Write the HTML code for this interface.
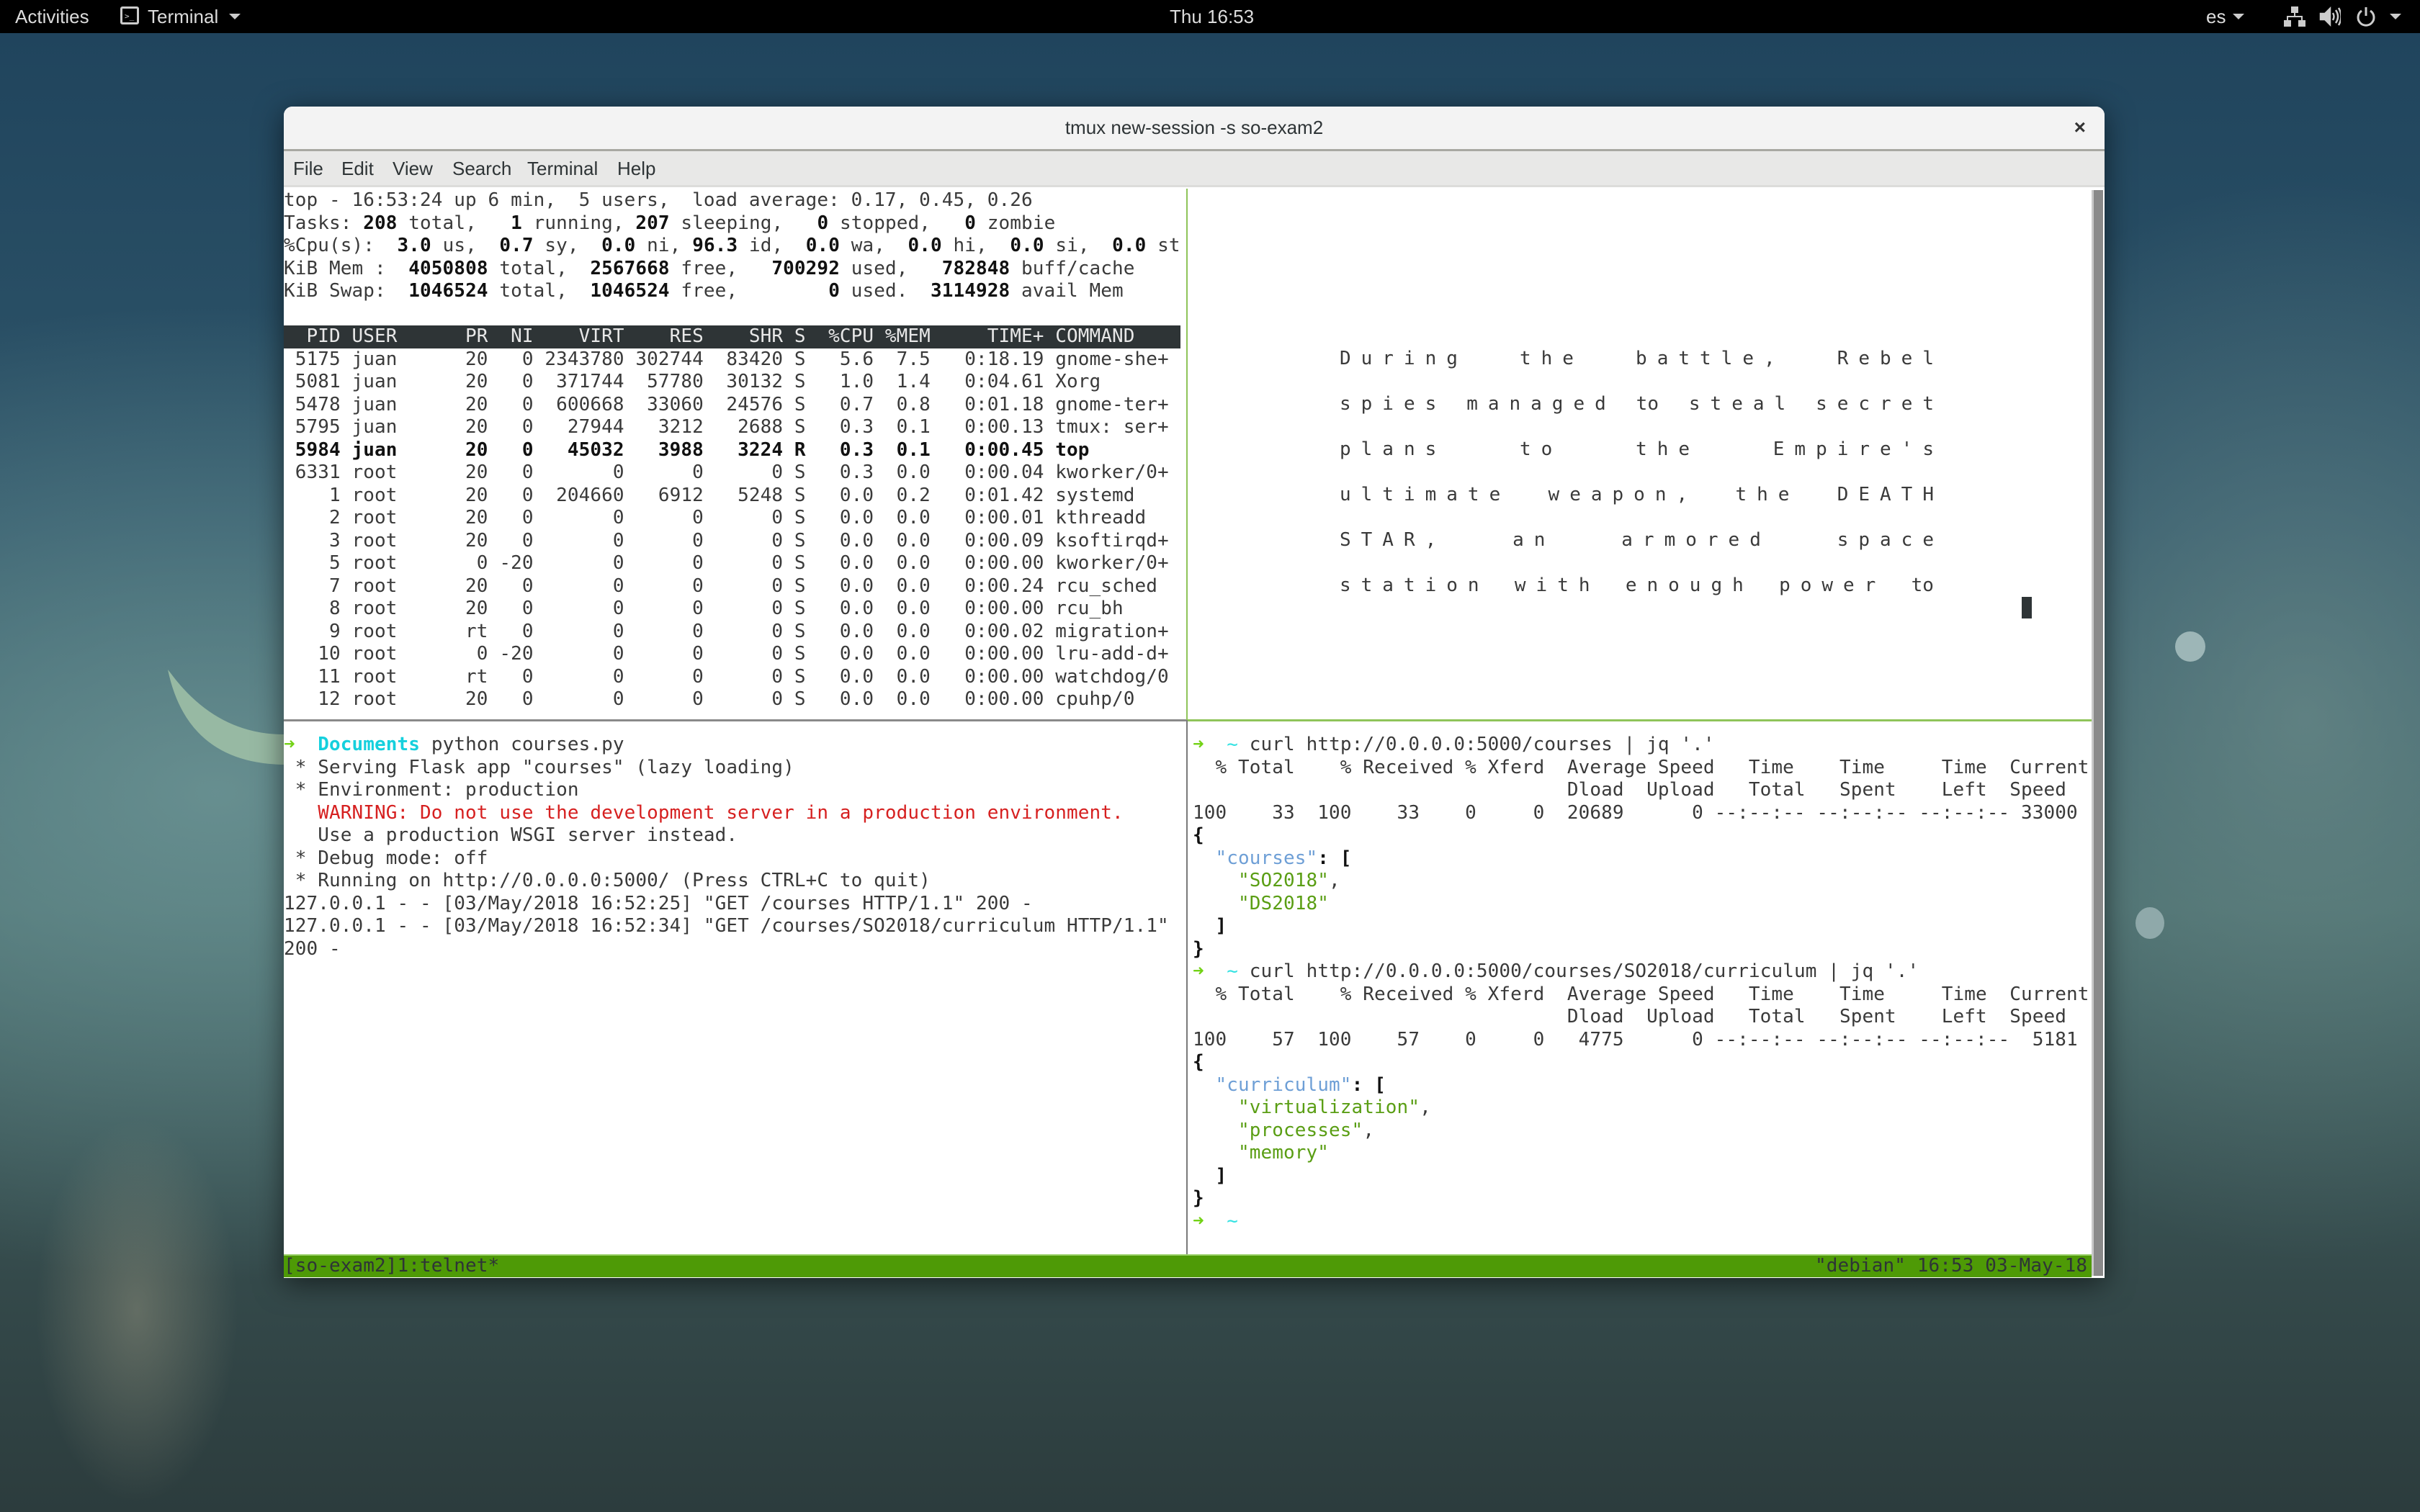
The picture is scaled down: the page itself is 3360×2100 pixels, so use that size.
<!DOCTYPE html>
<html><head><meta charset="utf-8"><style>
*{margin:0;padding:0;box-sizing:border-box}
html,body{width:3360px;height:2100px;overflow:hidden}
body{position:relative;font-family:"Liberation Sans",sans-serif;
background:
radial-gradient(ellipse 200px 380px at 190px 1820px,rgba(170,165,140,.4),rgba(170,165,140,0) 70%),
radial-gradient(ellipse 1400px 900px at 300px 1100px,rgba(110,150,150,.85),rgba(110,150,150,0) 75%),
radial-gradient(ellipse 800px 1000px at 3200px 1000px,rgba(120,150,145,.6),rgba(120,150,145,0) 75%),
linear-gradient(180deg,#1f435c 0%,#2f566a 35%,#456a6c 60%,#34494a 85%,#2c3c3d 100%);}
.top{position:absolute;left:0;top:0;width:3360px;height:46px;background:#000;color:#dcdcdc;font-size:26px}
.top span{position:absolute;top:8px}
.win{position:absolute;left:394px;top:148px;width:2528px;height:1627px;background:#fff;border-radius:12px 12px 0 0;box-shadow:0 8px 40px rgba(0,0,0,.55)}
.title{position:absolute;left:0;top:0;width:2528px;height:62px;background:#f3f3f3;border-radius:12px 12px 0 0;border-bottom:3px solid #a8a8a2;text-align:center;font-size:26px;line-height:58px;color:#2e3436}
.menu{position:absolute;left:0;top:62px;width:2528px;height:50px;background:#e8e8e7;border-bottom:3px solid #dcdcda;font-size:26px;color:#2e3436}
.menu span{position:absolute;top:9px}
pre{position:absolute;font-family:"DejaVu Sans Mono",monospace;font-size:26px;letter-spacing:0.1px;line-height:31.5px;color:#3a3a3a;white-space:pre}
b{color:#111;font-weight:bold}
.hd{background:#2e3436;color:#e8e8e8;display:inline-block;width:1245px}
.r{color:#d62020}.cy{color:#15d0dd;font-weight:bold}.ar{color:#73d216}.tl{color:#34e2e2}.k{color:#6e9fd6}.s{color:#5a9e14}
.sw{position:absolute;left:1860px;width:825px;display:flex;justify-content:space-between;font-family:"DejaVu Sans Mono",monospace;font-size:26px;color:#3a3a3a;white-space:pre}
.sw span{letter-spacing:14px;margin-right:-14px}
.sw span.t{letter-spacing:0;margin-right:0}
</style></head><body>
<div class="top">
<span style="left:21px">Activities</span>
<div style="position:absolute;left:167px;top:9px;width:26px;height:25px;border:3px solid #ccc;border-radius:3px"><div style="position:absolute;left:3px;top:4px;font-size:11px;color:#ccc;font-family:'DejaVu Sans Mono'">&gt;_</div></div>
<span style="left:205px">Terminal</span>
<div style="position:absolute;left:318px;top:19px;border-left:8px solid transparent;border-right:8px solid transparent;border-top:8px solid #ccc"></div>
<span style="left:1624px">Thu 16:53</span>
<span style="left:3063px">es</span>
<div style="position:absolute;left:3100px;top:19px;border-left:8px solid transparent;border-right:8px solid transparent;border-top:8px solid #ccc"></div>
<svg style="position:absolute;left:3170px;top:8px" width="32" height="30" viewBox="0 0 32 30" fill="#ccc"><rect x="11" y="1" width="10" height="9"/><rect x="15" y="10" width="2" height="6"/><rect x="5" y="14" width="22" height="2"/><rect x="5" y="14" width="2" height="6"/><rect x="25" y="14" width="2" height="6"/><rect x="1" y="20" width="10" height="9"/><rect x="21" y="20" width="10" height="9"/></svg>
<svg style="position:absolute;left:3220px;top:9px" width="30" height="28" viewBox="0 0 30 28" fill="none" stroke="#ccc" stroke-width="2.5"><path d="M2 10h6l7-7v22l-7-7H2z" fill="#ccc"/><path d="M19 9q3 5 0 10M23 5q6 9 0 18M27 2q7 12 0 24"/></svg>
<svg style="position:absolute;left:3270px;top:8px" width="30" height="30" viewBox="0 0 30 30" fill="none" stroke="#ccc" stroke-width="3"><path d="M9 7a11 11 0 1 0 12 0"/><path d="M15 2v12"/></svg>
<div style="position:absolute;left:3318px;top:19px;border-left:8px solid transparent;border-right:8px solid transparent;border-top:8px solid #ccc"></div>
</div>

<svg style="position:absolute;left:0;top:0" width="3360" height="2100">
<path d="M233 930 Q260 1060 394 1062 L394 1020 Q300 1020 237 935 Z" fill="#97b9a3"/>
<ellipse cx="3041" cy="898" rx="21" ry="21" fill="#9db6b7"/>
<ellipse cx="2985" cy="1282" rx="20" ry="22" fill="#8fa9aa"/>
</svg>

<div class="win">
<div class="title">tmux new-session -s so-exam2<span style="position:absolute;right:26px;top:0;font-size:28px;font-weight:bold;color:#333">×</span></div>
<div class="menu"><span style="left:13px">File</span><span style="left:80px">Edit</span><span style="left:151px">View</span><span style="left:234px">Search</span><span style="left:338px">Terminal</span><span style="left:463px">Help</span></div>
<div style="position:absolute;left:2510px;top:116px;width:16px;height:1508px;background:#8a8a8a;border-left:3px solid #c8c8c8"></div>
</div>

<pre style="left:394px;top:263px">top - 16:53:24 up 6 min,  5 users,  load average: 0.17, 0.45, 0.26
Tasks: <b>208</b> total,   <b>1</b> running, <b>207</b> sleeping,   <b>0</b> stopped,   <b>0</b> zombie
%Cpu(s):  <b>3.0</b> us,  <b>0.7</b> sy,  <b>0.0</b> ni, <b>96.3</b> id,  <b>0.0</b> wa,  <b>0.0</b> hi,  <b>0.0</b> si,  <b>0.0</b> st
KiB Mem :  <b>4050808</b> total,  <b>2567668</b> free,   <b>700292</b> used,   <b>782848</b> buff/cache
KiB Swap:  <b>1046524</b> total,  <b>1046524</b> free,        <b>0</b> used.  <b>3114928</b> avail Mem

<span class="hd">  PID USER      PR  NI    VIRT    RES    SHR S  %CPU %MEM     TIME+ COMMAND   </span>
 5175 juan      20   0 2343780 302744  83420 S   5.6  7.5   0:18.19 gnome-she+
 5081 juan      20   0  371744  57780  30132 S   1.0  1.4   0:04.61 Xorg
 5478 juan      20   0  600668  33060  24576 S   0.7  0.8   0:01.18 gnome-ter+
 5795 juan      20   0   27944   3212   2688 S   0.3  0.1   0:00.13 tmux: ser+
<b> 5984 juan      20   0   45032   3988   3224 R   0.3  0.1   0:00.45 top</b>
 6331 root      20   0       0      0      0 S   0.3  0.0   0:00.04 kworker/0+
    1 root      20   0  204660   6912   5248 S   0.0  0.2   0:01.42 systemd
    2 root      20   0       0      0      0 S   0.0  0.0   0:00.01 kthreadd
    3 root      20   0       0      0      0 S   0.0  0.0   0:00.09 ksoftirqd+
    5 root       0 -20       0      0      0 S   0.0  0.0   0:00.00 kworker/0+
    7 root      20   0       0      0      0 S   0.0  0.0   0:00.24 rcu_sched
    8 root      20   0       0      0      0 S   0.0  0.0   0:00.00 rcu_bh
    9 root      rt   0       0      0      0 S   0.0  0.0   0:00.02 migration+
   10 root       0 -20       0      0      0 S   0.0  0.0   0:00.00 lru-add-d+
   11 root      rt   0       0      0      0 S   0.0  0.0   0:00.00 watchdog/0
   12 root      20   0       0      0      0 S   0.0  0.0   0:00.00 cpuhp/0</pre>

<pre style="left:394px;top:1019px"><span class="ar">➜</span>  <span class="cy">Documents</span> python courses.py
 * Serving Flask app "courses" (lazy loading)
 * Environment: production
<span class="r">   WARNING: Do not use the development server in a production environment.</span>
   Use a production WSGI server instead.
 * Debug mode: off
 * Running on http://0.0.0.0:5000/ (Press CTRL+C to quit)
127.0.0.1 - - [03/May/2018 16:52:25] "GET /courses HTTP/1.1" 200 -
127.0.0.1 - - [03/May/2018 16:52:34] "GET /courses/SO2018/curriculum HTTP/1.1"
200 -</pre>

<pre style="left:1656px;top:1019px"><span class="ar">➜</span>  <span class="tl">~</span> curl http://0.0.0.0:5000/courses | jq '.'
  % Total    % Received % Xferd  Average Speed   Time    Time     Time  Current
                                 Dload  Upload   Total   Spent    Left  Speed
100    33  100    33    0     0  20689      0 --:--:-- --:--:-- --:--:-- 33000
<b>{</b>
  <span class="k">"courses"</span><b>: [</b>
    <span class="s">"SO2018"</span>,
    <span class="s">"DS2018"</span>
<b>  ]</b>
<b>}</b>
<span class="ar">➜</span>  <span class="tl">~</span> curl http://0.0.0.0:5000/courses/SO2018/curriculum | jq '.'
  % Total    % Received % Xferd  Average Speed   Time    Time     Time  Current
                                 Dload  Upload   Total   Spent    Left  Speed
100    57  100    57    0     0   4775      0 --:--:-- --:--:-- --:--:--  5181
<b>{</b>
  <span class="k">"curriculum"</span><b>: [</b>
    <span class="s">"virtualization"</span>,
    <span class="s">"processes"</span>,
    <span class="s">"memory"</span>
<b>  ]</b>
<b>}</b>
<span class="ar">➜</span>  <span class="tl">~</span></pre>

<div class="sw" style="top:483px"><span>During</span><span>the</span><span>battle,</span><span>Rebel</span></div>
<div class="sw" style="top:546px"><span>spies</span><span>managed</span><span class="t">to</span><span>steal</span><span>secret</span></div>
<div class="sw" style="top:609px"><span>plans</span><span>to</span><span>the</span><span>Empire's</span></div>
<div class="sw" style="top:672px"><span>ultimate</span><span>weapon,</span><span>the</span><span>DEATH</span></div>
<div class="sw" style="top:735px"><span>STAR,</span><span>an</span><span>armored</span><span>space</span></div>
<div class="sw" style="top:798px"><span>station</span><span>with</span><span>enough</span><span>power</span><span class="t">to</span></div>
<div style="position:absolute;left:2807px;top:829px;width:14px;height:30px;background:#2e3436"></div>

<div style="position:absolute;left:1647px;top:262px;width:2px;height:738px;background:#8fc45a"></div>
<div style="position:absolute;left:1647px;top:1000px;width:2px;height:742px;background:#7a7a7a"></div>
<div style="position:absolute;left:394px;top:999px;width:1253px;height:3px;background:#8a8a8a"></div>
<div style="position:absolute;left:1649px;top:999px;width:1255px;height:3px;background:#8fc45a"></div>

<div style="position:absolute;left:394px;top:1742px;width:2510px;height:32px;background:#4e9a06;border-top:2px solid #9bd06a"></div>
<pre style="left:394px;top:1743px;color:#2e3436">[so-exam2]1:telnet*</pre>
<pre style="left:2520px;top:1743px;color:#2e3436">"debian" 16:53 03-May-18</pre>
</body></html>
